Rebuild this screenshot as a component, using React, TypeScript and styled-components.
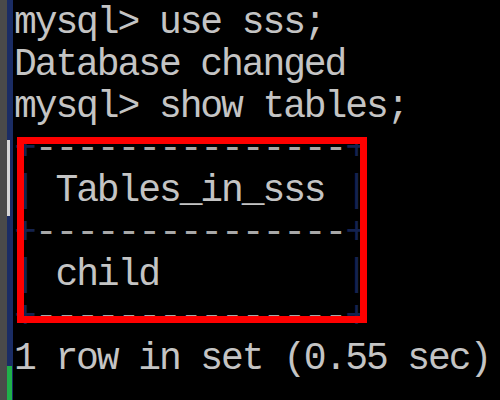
import React from "react";
import styled, { createGlobalStyle } from "styled-components";

const Global = createGlobalStyle`
  html, body { margin: 0; padding: 0; background: #000; overflow: hidden; }
`;

const Screen = styled.div`
  display: flex;
  width: 500px;
  height: 400px;
  background: #000;
  overflow: hidden;
`;

const Gutter = styled.div`
  width: 7px;
  background: #4a4a4a;
  flex-shrink: 0;
`;

const Track = styled.div`
  width: 6px;
  flex-shrink: 0;
  display: flex;
  flex-direction: column;
  background: #1a2c64;
`;

const Spacer = styled.div<{ $h?: number }>`
  height: ${(p) => (p.$h ? `${p.$h}px` : "auto")};
  flex: ${(p) => (p.$h ? "none" : "1")};
`;

const Thumb = styled.div`
  width: 3px;
  height: 76px;
  background: #d6d6d6;
`;

const Green = styled.div`
  width: 5px;
  height: 34px;
  background: #1fb04a;
`;

const Console = styled.div`
  position: relative;
  flex: 1;
  padding: 2px 0 0 1px;
  font-family: "Liberation Mono", "DejaVu Sans Mono", monospace;
  font-size: 38px;
  line-height: 42px;
  letter-spacing: -2.1px;
  color: #c4c4c4;
  white-space: pre;
`;

const Line = styled.div`
  height: 42px;
`;

const Bar = styled.span`
  color: #14224f;
`;

const Dash = styled.span`
  color: #a8a8a8;
`;

const Highlight = styled.div`
  position: absolute;
  left: 4px;
  top: 137px;
  width: 350px;
  height: 186px;
  box-sizing: border-box;
  border: 7px solid #ff0000;
  pointer-events: none;
`;

const Rule = () => (
  <Line>
    <Bar>+</Bar>
    <Dash>---------------</Dash>
    <Bar>+</Bar>
  </Line>
);

const Row = ({ text }: { text: string }) => (
  <Line>
    <Bar>|</Bar>
    {" " + text.padEnd(14, " ")}
    <Bar>|</Bar>
  </Line>
);

export default function App() {
  return (
    <>
      <Global />
      <Screen>
        <Gutter />
        <Track>
          <Spacer $h={140} />
          <Thumb />
          <Spacer />
          <Green />
        </Track>
        <Console>
          <Line>mysql&gt; use sss;</Line>
          <Line>Database changed</Line>
          <Line>mysql&gt; show tables;</Line>
          <Rule />
          <Row text="Tables_in_sss" />
          <Rule />
          <Row text="child" />
          <Rule />
          <Line>1 row in set (0.55 sec)</Line>
          <Highlight />
        </Console>
      </Screen>
    </>
  );
}
